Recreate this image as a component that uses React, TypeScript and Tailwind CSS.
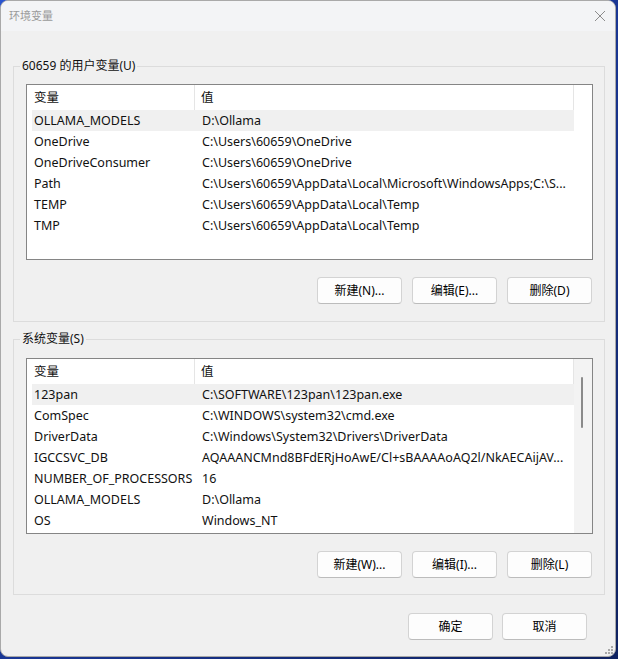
import React from 'react';

type Row = [string, string];

const userVars: Row[] = [
  ['OLLAMA_MODELS', 'D:\\Ollama'],
  ['OneDrive', 'C:\\Users\\60659\\OneDrive'],
  ['OneDriveConsumer', 'C:\\Users\\60659\\OneDrive'],
  ['Path', 'C:\\Users\\60659\\AppData\\Local\\Microsoft\\WindowsApps;C:\\S...'],
  ['TEMP', 'C:\\Users\\60659\\AppData\\Local\\Temp'],
  ['TMP', 'C:\\Users\\60659\\AppData\\Local\\Temp'],
];

const sysVars: Row[] = [
  ['123pan', 'C:\\SOFTWARE\\123pan\\123pan.exe'],
  ['ComSpec', 'C:\\WINDOWS\\system32\\cmd.exe'],
  ['DriverData', 'C:\\Windows\\System32\\Drivers\\DriverData'],
  ['IGCCSVC_DB', 'AQAAANCMnd8BFdERjHoAwE/Cl+sBAAAAoAQ2l/NkAECAijAV...'],
  ['NUMBER_OF_PROCESSORS', '16'],
  ['OLLAMA_MODELS', 'D:\\Ollama'],
  ['OS', 'Windows_NT'],
];

function WinButton({ label }: { label: string }) {
  return (
    <button className="w-[85px] h-[27px] bg-[#fdfdfd] border border-[#d3d3d3] border-b-[#bcbcbc] rounded-[4px] text-[12px] text-black flex items-center justify-center">
      {label}
    </button>
  );
}

function VarList({ rows, scroll }: { rows: Row[]; scroll?: boolean }) {
  return (
    <div className="w-[567px] h-[176px] border border-[#858585] bg-white flex overflow-hidden">
      <div className="w-[547px] flex flex-col">
        <div className="h-[25px] flex items-center border-r border-[#e5e5e5]">
          <div className="w-[168px] h-full flex items-center pl-[7px] pt-[1px] border-r border-[#e5e5e5]">变量</div>
          <div className="flex-1 pl-[6px] pt-[1px]">值</div>
        </div>
        {rows.map(([name, value], i) => (
          <div
            key={name + i}
            className={`h-[21px] ml-[5px] pt-[1px] flex items-center whitespace-nowrap ${i === 0 ? 'bg-[#f0f0f0]' : ''}`}
          >
            <div className="w-[163px] pl-[2px] overflow-hidden">{name}</div>
            <div className="flex-1 pl-[7px] overflow-hidden">{value}</div>
          </div>
        ))}
      </div>
      <div className={`flex-1 relative ${scroll ? 'bg-[#f3f3f3]' : 'bg-white'}`}>
        {scroll && (
          <div className="absolute left-[7px] top-[18px] w-[2px] h-[51px] rounded-full bg-[#8a8a8a]" />
        )}
      </div>
    </div>
  );
}

function Group({
  title,
  rows,
  scroll,
  buttons,
  top,
}: {
  title: string;
  rows: Row[];
  scroll?: boolean;
  buttons: string[];
  top: string;
}) {
  return (
    <div className={`relative ml-[12px] w-[592px] h-[256px] border border-[#dcdcdc] pl-[12px] ${top}`}>
      <span className="absolute left-[6px] -top-[9px] px-[2px] bg-[#f0f0f0] leading-[16px] text-[12px]">{title}</span>
      <VarList rows={rows} scroll={scroll} />
      <div className="w-[566px] flex justify-end gap-[10px] mt-[17px]">
        {buttons.map((b) => (
          <WinButton key={b} label={b} />
        ))}
      </div>
    </div>
  );
}

export default function App() {
  return (
    <div className="w-[618px] h-[659px] bg-gradient-to-br from-[#2a55d0] via-[#1a3795] to-[#0f2260] overflow-hidden">
      <div
        className="w-[616px] h-[657px] rounded-[8px] border border-[#a9a9a9] bg-[#f0f0f0] overflow-hidden text-[12.5px] text-[#111] flex flex-col"
        style={{ fontFamily: '"Noto Sans", "Noto Sans CJK SC", sans-serif' }}
      >
        <div className="h-[30px] bg-[#f3f4f6] flex items-center justify-between pl-[8px] pr-[8px]">
          <span className="text-[#9a9a9a] text-[11px]">环境变量</span>
          <svg width="12" height="12" viewBox="0 0 12 12" className="mr-[1px]">
            <path d="M1 1L11 11M11 1L1 11" stroke="#8c8c8c" strokeWidth="1" />
          </svg>
        </div>

        <div className="mt-[35px]">
          <Group
            title="60659 的用户变量(U)"
            rows={userVars}
            top="pt-[17px]"
            buttons={['新建(N)...', '编辑(E)...', '删除(D)']}
          />
        </div>
        <div className="mt-[17px]">
          <Group
            title="系统变量(S)"
            rows={sysVars}
            scroll
            top="pt-[18px]"
            buttons={['新建(W)...', '编辑(I)...', '删除(L)']}
          />
        </div>

        <div className="flex justify-end gap-[9px] pr-[28px] mt-[18px]">
          <WinButton label="确定" />
          <WinButton label="取消" />
        </div>

        <div className="flex-1 flex items-end justify-end pr-[1px] pb-[1px]">
          <svg width="9" height="9" viewBox="0 0 9 9">
            <rect x="6" y="0" width="2" height="2" fill="#a8a8a8" />
            <rect x="3" y="3" width="2" height="2" fill="#a8a8a8" />
            <rect x="6" y="3" width="2" height="2" fill="#a8a8a8" />
            <rect x="0" y="6" width="2" height="2" fill="#a8a8a8" />
            <rect x="3" y="6" width="2" height="2" fill="#a8a8a8" />
            <rect x="6" y="6" width="2" height="2" fill="#a8a8a8" />
          </svg>
        </div>
      </div>
    </div>
  );
}
